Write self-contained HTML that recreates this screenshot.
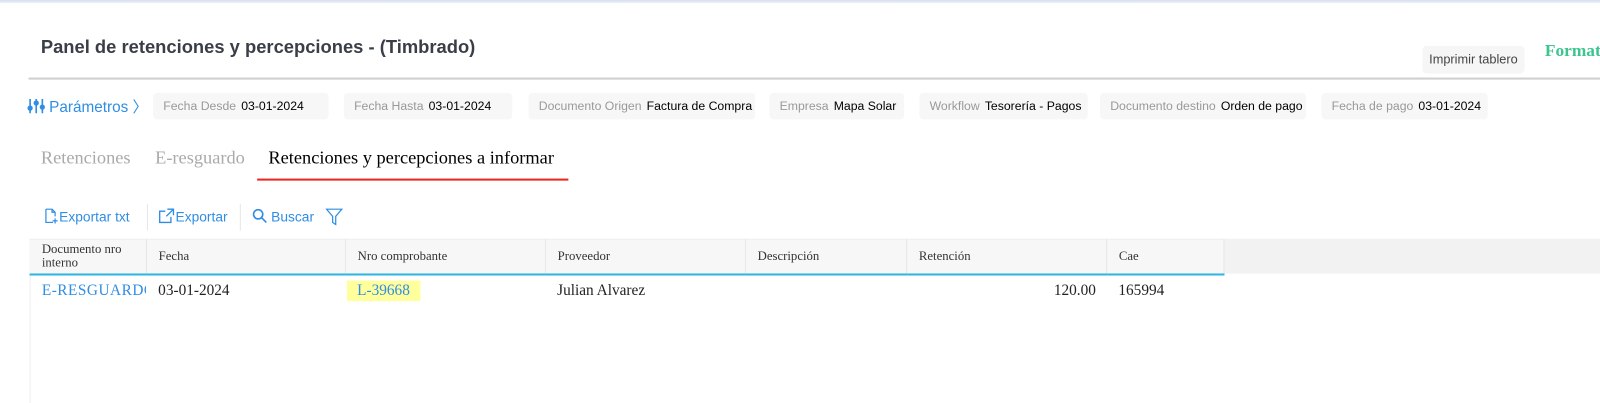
<!DOCTYPE html>
<html><head><meta charset="utf-8"><style>
*{box-sizing:border-box;margin:0;padding:0}
body{width:1600px;height:403px;overflow:hidden;background:#fff;font-family:"Liberation Sans",sans-serif;position:relative}
#w{position:absolute;left:0;top:0;width:1568px;height:395px;transform:scale(1.0204);transform-origin:0 0;overflow:hidden}
.abs{position:absolute;white-space:nowrap}
.topbar{position:absolute;left:0;top:0;width:1568px;height:3px;background:linear-gradient(#d6def0,#eef1f8)}
.title{left:40px;top:36px;font-size:18px;font-weight:bold;color:#3a3f47}
.hr{position:absolute;left:28px;top:76px;width:1540px;height:2px;background:#cfcfd2}
.btn{left:1394px;top:45px;width:100px;height:27px;background:#f6f6f6;border-radius:4px;font-size:12.5px;color:#444;text-align:center;line-height:27px}
.fmt{left:1514px;top:40px;font-family:"Liberation Serif",serif;font-weight:bold;font-size:17px;color:#3cc58f}
.chip{position:absolute;top:91px;height:26px;background:#f7f7f7;border-radius:4px;font-size:12px;line-height:26px;padding-left:10px;white-space:nowrap;color:#000;overflow:hidden}
.chip span{color:#999;margin-right:5px}
.tab{top:144px;font-family:"Liberation Serif",serif;font-size:18px;color:#aaa}
.tb{top:204px;font-size:13.5px;color:#2f8de4}
table{position:absolute;left:29px;top:234px;border-collapse:collapse;font-family:"Liberation Serif",serif}
th{height:34px;background:#f7f7f7;font-weight:normal;font-size:12.5px;color:#333;text-align:left;padding-left:12px;border-right:1px solid #e6e6e6;border-bottom:2px solid #2fb6e0;line-height:13px;border-top:1px solid #eee}
td{height:32px;font-size:15px;color:#222;padding-left:12px}
</style></head><body><div id="w">
<div class="topbar"></div>
<div class="abs title">Panel de retenciones y percepciones - (Timbrado)</div>
<div class="abs btn">Imprimir tablero</div>
<div class="abs fmt">Format</div>
<div class="hr"></div>
<div class="abs" style="left:27px;top:94px;font-size:15px;color:#2f8de4">
<svg width="17" height="16" viewBox="0 0 17 16" style="vertical-align:-2px"><g stroke="#2f8de4" stroke-width="1.6" fill="#2f8de4"><line x1="2.5" y1="1" x2="2.5" y2="15"/><line x1="8.5" y1="1" x2="8.5" y2="15"/><line x1="14.5" y1="1" x2="14.5" y2="15"/><circle cx="2.5" cy="10" r="1.8"/><circle cx="8.5" cy="5" r="1.8"/><circle cx="14.5" cy="9" r="1.8"/></g></svg> Parámetros 〉</div>
<div class="chip" style="left:150px;width:172px"><span>Fecha Desde</span>03-01-2024</div>
<div class="chip" style="left:337px;width:165px"><span>Fecha Hasta</span>03-01-2024</div>
<div class="chip" style="left:518px;width:222px"><span>Documento Origen</span>Factura de Compra</div>
<div class="chip" style="left:754px;width:132px"><span>Empresa</span>Mapa Solar</div>
<div class="chip" style="left:901px;width:165px"><span>Workflow</span>Tesorería - Pagos</div>
<div class="chip" style="left:1078px;width:202px"><span>Documento destino</span>Orden de pago</div>
<div class="chip" style="left:1295px;width:163px"><span>Fecha de pago</span>03-01-2024</div>
<div class="abs tab" style="left:40px">Retenciones</div>
<div class="abs tab" style="left:152px">E-resguardo</div>
<div class="abs tab" style="left:263px;color:#000">Retenciones y percepciones a informar</div>
<div style="position:absolute;left:252px;top:175px;width:305px;height:2px;background:#e8281e"></div>
<div class="abs tb" style="left:43px"><svg width="15" height="15" viewBox="0 0 15 15" style="vertical-align:-2px" fill="none" stroke="#2f8de4" stroke-width="1.2"><path d="M2 1h6l3 3v4M2 1v13h7M8 1v3h3M11 10v5M8.5 12.5h5"/></svg>Exportar txt</div>
<div style="position:absolute;left:144px;top:200px;width:1px;height:26px;background:#e5e5e5"></div>
<div class="abs tb" style="left:155px"><svg width="17" height="15" viewBox="0 0 17 15" style="vertical-align:-2px" fill="none" stroke="#2f8de4" stroke-width="1.3"><path d="M7 3H1.5v11h11V8.5M9 1h6v6M15 1L8 8"/></svg>Exportar</div>
<div style="position:absolute;left:235px;top:200px;width:1px;height:26px;background:#e5e5e5"></div>
<div class="abs tb" style="left:247px"><svg width="15" height="15" viewBox="0 0 15 15" style="vertical-align:-2px" fill="none" stroke="#2f8de4" stroke-width="1.6"><circle cx="6" cy="6" r="4.5"/><path d="M9.5 9.5L14 14"/></svg> Buscar</div>
<div class="abs" style="left:319px;top:204px"><svg width="17" height="17" viewBox="0 0 17 17" fill="none" stroke="#2f8de4" stroke-width="1.2"><path d="M1 1h15L10 8v8l-3-2V8z"/></svg></div>
<div style="position:absolute;left:1199px;top:234px;width:401px;height:34px;background:#f2f2f2"></div>
<div style="position:absolute;left:29px;top:234px;width:1px;height:169px;background:#eee"></div>
<table>
<tr><th style="width:114px">Documento nro<br>interno</th><th style="width:195px">Fecha</th><th style="width:196px">Nro comprobante</th><th style="width:196px">Proveedor</th><th style="width:158px">Descripción</th><th style="width:196px">Retención</th><th style="width:115px">Cae</th></tr>
<tr><td style="color:#2f8de4;letter-spacing:0.5px;overflow:hidden;max-width:114px;white-space:nowrap">E-RESGUARDO</td><td>03-01-2024</td><td style="padding-left:2px"><span style="background:#ffff9c;color:#2f8de4;padding:2px 10px">L-39668</span></td><td>Julian Alvarez</td><td></td><td style="text-align:right;padding-right:10px">120.00</td><td>165994</td></tr>
</table>
</div></body></html>
